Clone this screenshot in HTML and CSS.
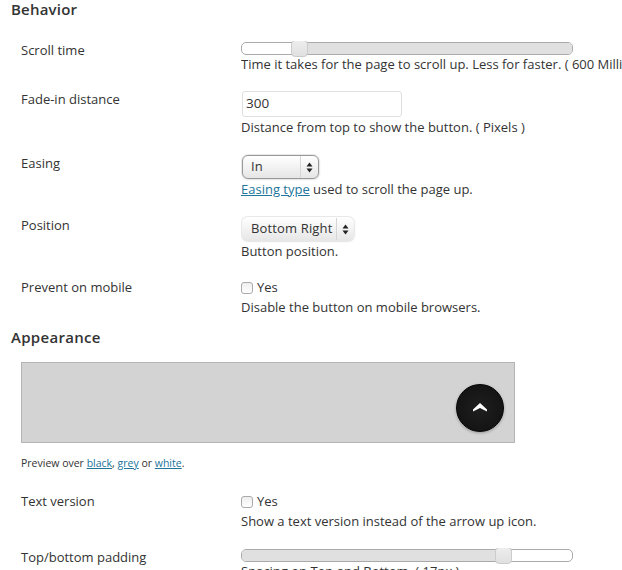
FILE: index.html
```html
<!DOCTYPE html>
<html lang="en">
<head>
  <meta charset="UTF-8">
  <title>Scroll to top settings</title>
  <link rel="stylesheet" href="styles.css">
</head>
<body>
  <h3 class="section-title first">Behavior</h3>

  <div class="row row-slider">
    <div class="label">Scroll time</div>
    <div class="field">
      <div class="slider"><div class="slider-on slider-left"></div><div class="knob knob-time"></div></div>
      <p class="desc">Time it takes for the page to scroll up. Less for faster. ( 600 Milliseconds )</p>
    </div>
  </div>

  <div class="row row-input">
    <div class="label">Fade-in distance</div>
    <div class="field">
      <div class="text-input">300</div>
      <p class="desc">Distance from top to show the button. ( Pixels )</p>
    </div>
  </div>

  <div class="row row-select">
    <div class="label">Easing</div>
    <div class="field">
      <div class="select select-outlined select-easing">
        <span class="select-text">In</span>
        <span class="select-arrows">
          <svg width="7" height="11" viewBox="0 0 7 11"><path d="M3.5 0.5L6.5 4.5H0.5Z M3.5 10.5L0.5 6.5H6.5Z" fill="#222"/></svg>
        </span>
      </div>
      <p class="desc"><a href="#">Easing type</a> used to scroll the page up.</p>
    </div>
  </div>

  <div class="row row-select">
    <div class="label">Position</div>
    <div class="field">
      <div class="select">
        <span class="select-text">Bottom Right</span>
        <span class="select-arrows">
          <svg width="7" height="11" viewBox="0 0 7 11"><path d="M3.5 0.5L6.5 4.5H0.5Z M3.5 10.5L0.5 6.5H6.5Z" fill="#222"/></svg>
        </span>
      </div>
      <p class="desc">Button position.</p>
    </div>
  </div>

  <div class="row row-check">
    <div class="label">Prevent on mobile</div>
    <div class="field">
      <div class="check-line"><span class="checkbox"></span>Yes</div>
      <p class="desc desc-check">Disable the button on mobile browsers.</p>
    </div>
  </div>

  <h3 class="section-title">Appearance</h3>

  <div class="preview">
    <div class="top-button">
      <svg width="14" height="9" viewBox="0 0 14 9"><path d="M0 6.5L7 0L14 6.5L14 8.5L7 5L0 8.5Z" fill="#fff"/></svg>
    </div>
  </div>
  <p class="preview-note">Preview over <a href="#">black</a>, <a href="#">grey</a> or <a href="#">white</a>.</p>

  <div class="row row-check row-text">
    <div class="label">Text version</div>
    <div class="field">
      <div class="check-line"><span class="checkbox"></span>Yes</div>
      <p class="desc desc-check">Show a text version instead of the arrow up icon.</p>
    </div>
  </div>

  <div class="row row-slider row-padding">
    <div class="label">Top/bottom padding</div>
    <div class="field">
      <div class="slider"><div class="slider-on slider-right"></div><div class="knob knob-padding"></div></div>
      <p class="desc">Spacing on Top and Bottom. ( 17px )</p>
    </div>
  </div>
</body>
</html>
```

FILE: styles.css
```css
* {
  box-sizing: border-box;
}

html, body {
  height: 570px;
  overflow: hidden;
}

body {
  margin: 0;
  width: 622px;
  background: #fff;
  color: #333;
  font-family: "Open Sans", "Liberation Sans", sans-serif;
  font-size: 13px;
  line-height: 18px;
}

a {
  color: #21759b;
}

.section-title {
  margin: 11px 0 0 11px;
  font-size: 15px;
  line-height: 20px;
  font-weight: 600;
  letter-spacing: 0.3px;
  color: #333;
}

.section-title.first {
  margin-top: -1px;
  letter-spacing: 0.2px;
}

.row {
  display: grid;
  grid-template-columns: 220px 381px;
  margin-left: 21px;
}

.label {
  white-space: nowrap;
}

.field {
  white-space: nowrap;
  min-width: 0;
  overflow: hidden;
}

.desc {
  margin: 0;
  white-space: nowrap;
}

/* sliders */
.row-slider {
  margin-top: 22px;
}

.slider {
  position: relative;
  width: 332px;
  height: 13px;
  margin-top: 1px;
  border: 1px solid #aaa;
  border-radius: 5px;
  background: #fff;
}

.slider-on {
  position: absolute;
  top: 0;
  bottom: 0;
  background: #e0e0e0;
}

.slider-left {
  left: 58px;
  right: 0;
  border-radius: 0 4px 4px 0;
}

.slider-right {
  left: 0;
  right: 69px;
  border-radius: 4px 0 0 4px;
}

.knob {
  position: absolute;
  top: -3px;
  width: 17px;
  height: 17px;
  border: 1px solid #ccc;
  border-radius: 4px;
  background: linear-gradient(#ededed, #e0e0e0);
}

.knob-time {
  left: 49px;
}

.knob-padding {
  right: 60px;
}

/* text box */
.row-input {
  margin-top: 17px;
}

.text-input {
  width: 160px;
  height: 26px;
  margin: 1px 0 1px 1px;
  padding: 2px 3px;
  border: 1px solid #dfdfdf;
  border-radius: 3px;
  font-size: 13.5px;
}

.row-input .desc {
  margin-top: 1px;
}

/* selects */
.row-select {
  margin-top: 18px;
}

.select {
  display: inline-flex;
  height: 24px;
  margin: 1px 0 0 1px;
  vertical-align: top;
  align-items: center;
  border-radius: 6px;
  background: linear-gradient(#fff, #e6e6e6);
  box-shadow: 0 0 2px rgba(0, 0, 0, 0.35);
}

.select-outlined {
  border: 1px solid #999;
}

.select-easing {
  width: 77px;
}

.select-text {
  flex: 1;
  padding: 0 3px 2px 9px;
  letter-spacing: 0.15px;
}

.select-outlined .select-text {
  padding-left: 8px;
}

.select-arrows {
  display: flex;
  width: 18px;
  height: 22px;
  align-items: center;
  justify-content: center;
  border-left: 1px solid #d5d5d5;
}

.select + .desc {
  margin-top: 1px;
}

/* checkboxes */
.row-check {
  margin-top: 18px;
}

.check-line {
  display: flex;
  align-items: center;
}

.checkbox {
  width: 12px;
  height: 12px;
  margin: 1px 4px 0 0;
  border: 1px solid #aaa;
  border-radius: 3px;
  background: linear-gradient(#eee, #fff);
}

.desc-check {
  margin-top: 2px;
}

/* preview */
.preview {
  display: flex;
  width: 494px;
  height: 81px;
  margin: 15px 0 0 21px;
  padding: 11px 10px 0 0;
  align-items: center;
  justify-content: flex-end;
  border: 1px solid #b5b5b5;
  background: #d3d3d3;
}

.top-button {
  display: flex;
  width: 48px;
  height: 48px;
  padding-bottom: 1px;
  align-items: center;
  justify-content: center;
  border: 1px solid #000;
  border-radius: 50%;
  background: radial-gradient(circle, #1f1f1f, #111 90%);
  box-shadow: 0 1px 3px rgba(0, 0, 0, 0.3);
}

.preview-note {
  margin: 11px 0 0 21px;
  font-size: 10.5px;
  line-height: 18px;
}

.row-text {
  margin-top: 20px;
}

.row-padding {
  margin-top: 18px;
}
```
